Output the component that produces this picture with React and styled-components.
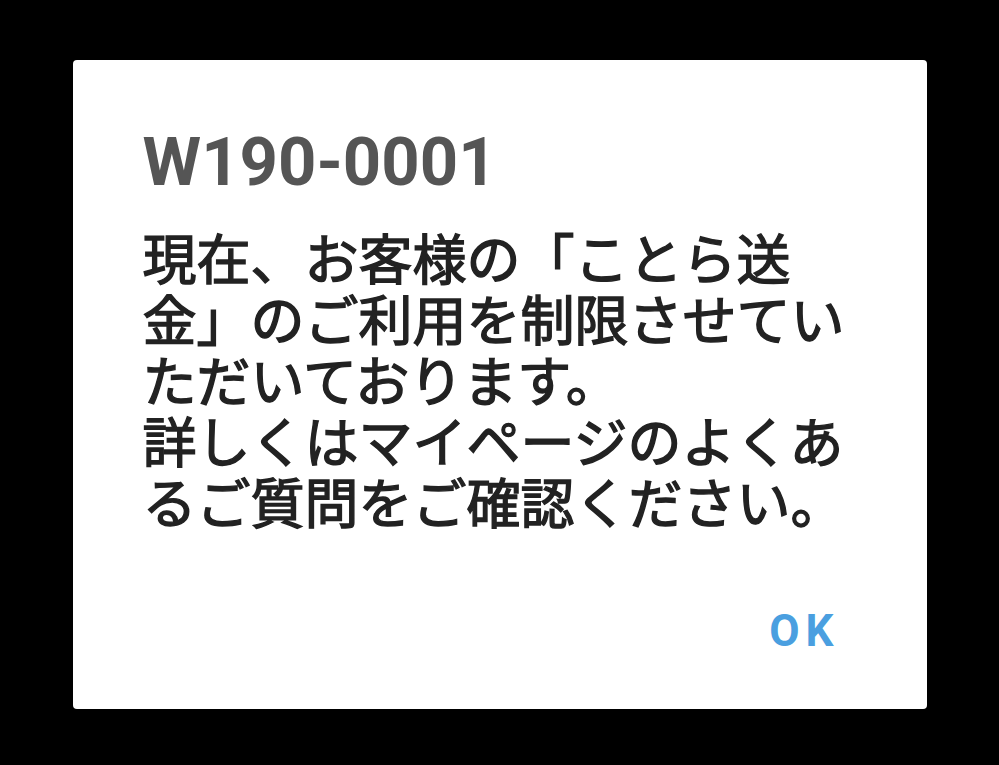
import React from 'react'
import styled, { createGlobalStyle } from 'styled-components'

const GlobalStyle = createGlobalStyle`
  html, body {
    margin: 0;
    padding: 0;
    background: #000;
  }
`

function App() {
  return (
    <>
      <GlobalStyle />
      <Screen>
        <Dialog>
          <Title>W190-0001</Title>
          <Message>
            現在、お客様の「ことら送金」のご利用を制限させていただいております。
            <br />
            詳しくはマイページのよくあるご質問をご確認ください。
          </Message>
          <Actions>
            <OkButton>OK</OkButton>
          </Actions>
        </Dialog>
      </Screen>
    </>
  )
}

export default App

const Screen = styled.div`
  display: flex;
  align-items: center;
  justify-content: center;
  box-sizing: border-box;
  width: 100vw;
  height: 100vh;
  padding-top: 4px;
  background: #000;
`

const Dialog = styled.div`
  display: flex;
  flex-direction: column;
  box-sizing: border-box;
  width: 854px;
  height: 649px;
  padding: 69px 70px 56px 70px;
  background: #fff;
  border-radius: 4px;
`

const Title = styled.h1`
  margin: 0;
  color: #555555;
  font-family: Roboto, "Noto Sans", sans-serif;
  font-size: 67px;
  font-weight: 700;
  line-height: 1;
`

// medium weight is not installed: regular plus a thin stroke
const Message = styled.p`
  margin: 30px 0 0 0;
  color: #222222;
  font-family: "Noto Sans CJK JP", sans-serif;
  font-size: 54px;
  font-weight: 400;
  line-height: 61px;
  -webkit-text-stroke: 1.4px #222222;
`

const Actions = styled.div`
  display: flex;
  justify-content: flex-end;
  margin-top: auto;
  padding-right: 17px;
`

const OkButton = styled.button`
  margin: 0;
  padding: 0;
  border: none;
  background: none;
  color: #4a9fe0;
  font-family: Roboto, sans-serif;
  font-size: 44px;
  font-weight: 700;
  letter-spacing: 6px;
  line-height: 1;
`
